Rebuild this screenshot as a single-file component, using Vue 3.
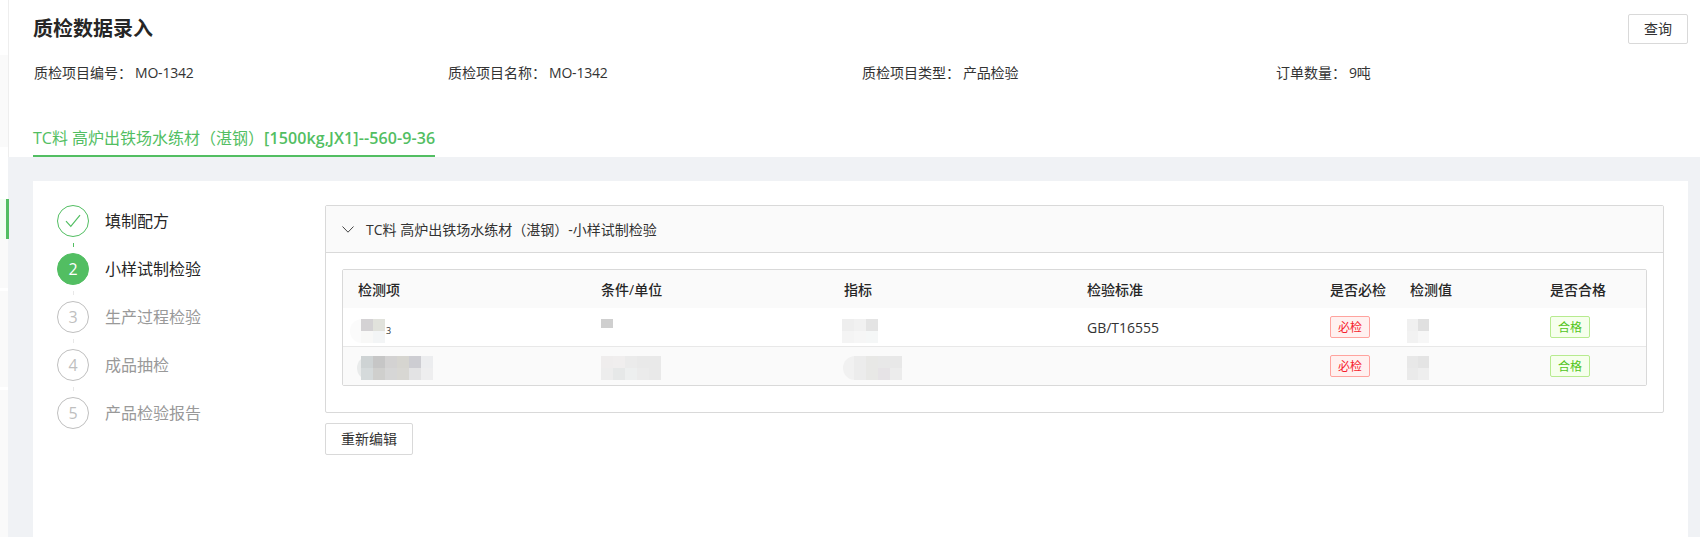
<script setup>
const steps = [
  { label: '填制配方', state: 'done' },
  { label: '小样试制检验', state: 'active', num: 2 },
  { label: '生产过程检验', state: 'todo', num: 3 },
  { label: '成品抽检', state: 'todo', num: 4 },
  { label: '产品检验报告', state: 'todo', num: 5 }
]
const infos = [
  ['质检项目编号：', 'MO-1342'],
  ['质检项目名称：', 'MO-1342'],
  ['质检项目类型：', '产品检验'],
  ['订单数量：', '9吨']
]
const heads = ['检测项', '条件/单位', '指标', '检验标准', '是否必检', '检测值', '是否合格']
const rows = [
  {
    cls: 'row-a',
    item: { cols: 2, w: 12, lead: 3, blob: 'soft', tiles: ['#d4d2d4', '#e1e2dc', '#f8f8f7', '#f3f5f6'], sub: '3' },
    cond: { cols: 1, w: 12, h: 9, tiles: ['#cfcfcf'] },
    target: { cols: 3, w: 12, lead: -2, tiles: ['#eeeeee', '#f1f1f1', '#e4e4e4', '#f4f4f4', '#f6f6f6', '#f5f7f7'] },
    std: 'GB/T16555',
    value: { cols: 2, w: 11, lead: -3, tiles: ['#f0f0f0', '#e0e0e0', '#f2f2f2', '#f7f7f7'] }
  },
  {
    cls: 'row-b',
    item: { cols: 6, w: 12, lead: 3, blob: 'grey', tiles: ['#ced3d4', '#c6c6c6', '#d3d2d2', '#d6d5d0', '#cdcdd2', '#ecedef', '#d5dadb', '#cfcfcd', '#d6d6d6', '#d8d7d3', '#e3e3e4', '#eeeeef'] },
    cond: { cols: 5, w: 12, tiles: ['#efeded', '#f0eeee', '#ebebeb', '#e9e9e9', '#e9e9e9', '#ededed', '#e6e8e8', '#edefef', '#ebebeb', '#e9e9e9'] },
    target: { cols: 4, w: 12, lead: 10, blob: 'pale', tiles: ['#ececec', '#e8e8e6', '#e8e8e8', '#e8e8e8', '#ececec', '#e8e8e6', '#e6e3e6', '#ececec'] },
    std: '',
    value: { cols: 2, w: 11, lead: -3, tiles: ['#e8e8e8', '#e4e4e4', '#eaeaea', '#eeeeee'] }
  }
]
const tileStyle = (m) => ({
  gridTemplateColumns: `repeat(${m.cols}, ${m.w}px)`,
  gridAutoRows: m.h ? `${m.h}px` : '12px',
  marginLeft: m.lead ? `${m.lead}px` : null
})
</script>

<template>
  <div class="page">
    <aside class="rail">
      <div class="rail-seg s1"></div>
      <div class="rail-seg active"></div>
      <div class="rail-seg s2"></div>
      <div class="rail-seg s3"></div>
      <div class="rail-seg s4"></div>
    </aside>

    <main class="main">
      <header class="top">
        <div class="title-row">
          <h1 class="title">质检数据录入</h1>
          <button class="btn query">查询</button>
        </div>
        <div class="info-row">
          <div v-for="info in infos" :key="info[0]" class="info">
            <span>{{ info[0] }}</span><span class="info-val">{{ info[1] }}</span>
          </div>
        </div>
        <div class="tab">TC料 高炉出铁场水练材（湛钢）<span class="tab-latin">[1500kg,JX1]--560-9-36</span></div>
      </header>

      <section class="body">
        <div class="card">
          <div class="steps">
            <template v-for="(s, i) in steps" :key="s.label">
              <div class="step" :class="s.state">
                <span class="dot">
                  <svg v-if="s.state === 'done'" width="16" height="14" viewBox="0 0 16 14" fill="none">
                    <path d="M1 7.2 L5.8 12.4 L15 1.2" stroke="#52be62" stroke-width="1.2" />
                  </svg>
                  <template v-else>{{ s.num }}</template>
                </span>
                <span class="step-label">{{ s.label }}</span>
              </div>
              <div v-if="i < steps.length - 1" class="link" :class="{ on: s.state === 'done' }"></div>
            </template>
          </div>

          <div class="content">
            <div class="panel">
              <div class="panel-head">
                <svg class="chev" width="12" height="7" viewBox="0 0 12 7" fill="none">
                  <path d="M0.5 0.5 L6 6.2 L11.5 0.5" stroke="#444" stroke-width="1" />
                </svg>
                <span>TC料 高炉出铁场水练材（湛钢）-小样试制检验</span>
              </div>
              <div class="panel-body">
                <div class="table">
                  <div class="tr thead">
                    <div v-for="h in heads" :key="h" class="td">{{ h }}</div>
                  </div>
                  <div v-for="r in rows" :key="r.cls" class="tr" :class="r.cls">
                    <div class="td blurred">
                      <div class="mosaic" :class="r.item.blob" :style="tileStyle(r.item)">
                        <i v-for="(c, n) in r.item.tiles" :key="n" :style="{ background: c }"></i>
                      </div>
                      <span v-if="r.item.sub" class="sub">{{ r.item.sub }}</span>
                    </div>
                    <div class="td blurred">
                      <div class="mosaic" :style="tileStyle(r.cond)">
                        <i v-for="(c, n) in r.cond.tiles" :key="n" :style="{ background: c }"></i>
                      </div>
                    </div>
                    <div class="td blurred">
                      <div class="mosaic" :class="r.target.blob" :style="tileStyle(r.target)">
                        <i v-for="(c, n) in r.target.tiles" :key="n" :style="{ background: c }"></i>
                      </div>
                    </div>
                    <div class="td">{{ r.std }}</div>
                    <div class="td"><span class="tag red">必检</span></div>
                    <div class="td blurred">
                      <div class="mosaic" :style="tileStyle(r.value)">
                        <i v-for="(c, n) in r.value.tiles" :key="n" :style="{ background: c }"></i>
                      </div>
                    </div>
                    <div class="td"><span class="tag green">合格</span></div>
                  </div>
                </div>
              </div>
            </div>
            <button class="btn redo">重新编辑</button>
          </div>
        </div>
      </section>
    </main>
  </div>
</template>

<style>
html, body { margin: 0; background: #fff; overflow: hidden; }
</style>

<style scoped>
.page {
  display: flex;
  width: 1700px;
  height: 537px;
  overflow: hidden;
  font-family: "Open Sans", "Noto Sans CJK SC", sans-serif;
  font-size: 14px;
  color: #333;
}
.rail {
  width: 8px;
  flex: none;
  background: #fff;
  position: relative;
  z-index: 1;
}
.rail-seg { position: absolute; left: 0; width: 8px; background: #fafafa; }
.rail-seg.s1 { top: 55px; height: 92px; }
.rail-seg.active {
  top: 199px;
  height: 40px;
  width: 9px;
  box-sizing: border-box;
  background: #f3fff3;
  border-right: 3px solid #52be62;
}
.rail-seg.s2 { top: 239px; height: 49px; }
.rail-seg.s3 { top: 291px; height: 96px; }
.rail-seg.s4 { top: 390px; height: 147px; }

.main {
  flex: 1;
  min-width: 0;
  display: flex;
  flex-direction: column;
  background: #f0f2f5;
}
.top {
  height: 157px;
  box-sizing: border-box;
  background: #fff;
  padding: 14px 12px 0 24px;
  border-left: 1px solid #eee;
}
.title-row {
  display: flex;
  justify-content: space-between;
  align-items: flex-start;
}
.title {
  margin: 0;
  font-size: 20px;
  line-height: 30px;
  font-weight: 700;
  color: #262626;
}
.btn {
  font: inherit;
  font-size: 14px;
  color: #333;
  background: #fff;
  border: 1px solid #d9d9d9;
  border-radius: 2px;
  padding: 0;
  line-height: 1;
}
.query { width: 60px; height: 30px; }
.info-row {
  display: grid;
  grid-template-columns: repeat(4, 414px);
  margin: 18px 0 0 1px;
  line-height: 22px;
  font-size: 14px;
}
.info { white-space: nowrap; }
.info-val { margin-left: 3px; letter-spacing: -0.2px; }
.tab {
  display: inline-block;
  margin-top: 42px;
  font-size: 16px;
  line-height: 24px;
  padding-bottom: 5px;
  color: #52be62;
  border-bottom: 2px solid #52be62;
  white-space: nowrap;
}
.tab-latin { font-weight: 600; letter-spacing: 0.1px; }
.body {
  flex: 1;
  min-height: 0;
  display: flex;
  padding: 24px 12px 0 25px;
}
.card {
  flex: 1;
  min-width: 0;
  display: flex;
  background: #fff;
  padding: 24px 24px 0 24px;
}
.steps { width: 268px; flex: none; }
.step {
  display: flex;
  align-items: center;
  height: 32px;
  font-size: 16px;
}
.dot {
  width: 32px;
  height: 32px;
  box-sizing: border-box;
  border-radius: 50%;
  border: 1px solid #bfbfbf;
  display: flex;
  align-items: center;
  justify-content: center;
  font-size: 16px;
  color: #bfbfbf;
  flex: none;
}
.step-label { margin-left: 16px; color: #999; line-height: 24px; }
.step.done .dot { border-color: #52be62; }
.step.active .dot { background: #52be62; border-color: #52be62; color: #fff; }
.step.done .step-label, .step.active .step-label { color: #262626; }
.link {
  height: 4px;
  width: 1px;
  margin: 6px 0 6px 16px;
  background: #e8e8e8;
}
.link.on { background: #52be62; }

.content { flex: 1; min-width: 0; }
.panel {
  border: 1px solid #d9d9d9;
  border-radius: 2px;
  background: #fff;
}
.panel-head {
  height: 46px;
  display: flex;
  align-items: center;
  padding-left: 16px;
  background: #fafafa;
  border-bottom: 1px solid #d9d9d9;
  font-size: 14px;
  color: #333;
}
.chev { margin-right: 12px; }
.panel-body { padding: 16px 16px 26px; }
.table {
  border: 1px solid #d9d9d9;
  border-radius: 2px;
}
.tr {
  display: grid;
  grid-template-columns: 243px 243px 243px 243px 80px 140px 1fr;
  height: 38px;
}
.td {
  padding-left: 15px;
  display: flex;
  align-items: center;
  white-space: nowrap;
}
.thead { background: #fafafa; }
.thead .td { font-weight: 500; color: #262626; }
.row-a { border-bottom: 1px solid #e8e8e8; }
.row-b { background: #fafafa; }
.blurred { align-items: flex-start; }
.row-a .mosaic { margin-top: 11px; }
.row-b .mosaic { margin-top: 9px; }
.mosaic { display: grid; position: relative; }
.mosaic i { display: block; position: relative; }
.mosaic.soft::before,
.mosaic.grey::before,
.mosaic.pale::before {
  content: "";
  position: absolute;
  top: 0;
  bottom: 0;
  left: -11px;
  right: 0;
  border-radius: 12px;
}
.mosaic.soft::before { background: #fbfbfb; }
.mosaic.grey::before { left: -4px; background: #e9ebeb; }
.mosaic.pale::before { background: #f1f1f1; }
.sub { font-size: 9px; line-height: 12px; margin-top: 17px; margin-left: 1px; }
.tag {
  width: 40px;
  height: 22px;
  box-sizing: border-box;
  border: 1px solid;
  border-radius: 2px;
  display: flex;
  align-items: center;
  justify-content: center;
  font-size: 12px;
}
.tag.red { background: #fff1f0; border-color: #ffa39e; color: #f5222d; }
.tag.green { background: #f6ffed; border-color: #b7eb8f; color: #52c41a; }
.redo {
  display: block;
  width: 88px;
  height: 32px;
  margin-top: 10px;
}
</style>
